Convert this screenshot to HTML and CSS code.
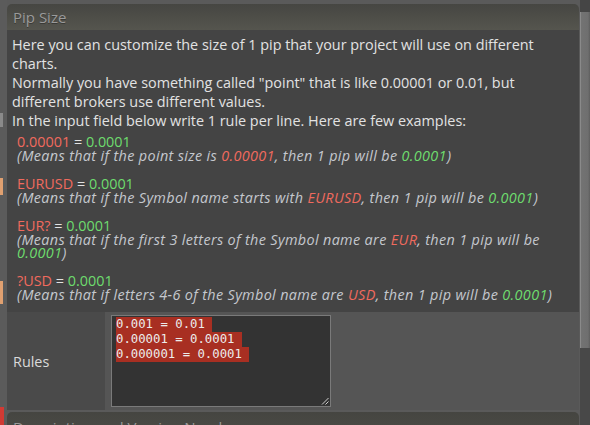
FILE: index.html
```html
<!DOCTYPE html>
<html>
<head>
<meta charset="utf-8">
<link rel="stylesheet" href="styles.css">
</head>
<body>
<div class="strip">
  <div class="mark mark-a"></div>
  <div class="mark mark-b"></div>
  <div class="mark mark-c"></div>
  <div class="mark mark-d"></div>
</div>
<div class="main">
  <section class="panel">
    <div class="panel-head">Pip Size</div>
    <div class="panel-body">
      <p class="intro">Here you can customize the size of 1 pip that your project will use on different charts.<br>Normally you have something called "point" that is like 0.00001 or 0.01, but different brokers use different values.<br>In the input field below write 1 rule per line. Here are few examples:</p>
      <div class="examples">
        <div class="ex">
          <div><span class="r">0.00001</span> = <span class="g">0.0001</span></div>
          <div class="it">(Means that if the point size is <span class="r">0.00001</span>, then 1 pip will be <span class="g">0.0001</span>)</div>
        </div>
        <div class="ex">
          <div><span class="r">EURUSD</span> = <span class="g">0.0001</span></div>
          <div class="it">(Means that if the Symbol name starts with <span class="r">EURUSD</span>, then 1 pip will be <span class="g">0.0001</span>)</div>
        </div>
        <div class="ex">
          <div><span class="r">EUR?</span> = <span class="g">0.0001</span></div>
          <div class="it">(Means that if the first 3 letters of the Symbol name are <span class="r">EUR</span>, then 1 pip will be <span class="g">0.0001</span>)</div>
        </div>
        <div class="ex">
          <div><span class="r">?USD</span> = <span class="g">0.0001</span></div>
          <div class="it">(Means that if letters 4-6 of the Symbol name are <span class="r">USD</span>, then 1 pip will be <span class="g">0.0001</span>)</div>
        </div>
      </div>
    </div>
    <div class="field-row">
      <div class="label">Rules</div>
      <div class="field">
        <div class="textarea">
          <div class="line"><span class="sel">0.001 = 0.01 </span></div>
          <div class="line"><span class="sel">0.00001 = 0.0001 </span></div>
          <div class="line"><span class="sel">0.000001 = 0.0001 </span></div>
          <svg class="grip" width="8" height="8" viewBox="0 0 8 8"><path d="M1 7.5L7.5 1M4.5 7.5L7.5 4.5" stroke="#cfcfcf" stroke-width="1" fill="none"/></svg>
        </div>
      </div>
    </div>
  </section>
  <section class="panel next">
    <div class="panel-head">Description and Version Number</div>
  </section>
</div>
<div class="scrollbar">
  <div class="sb-top"></div>
  <div class="sb-thumb"></div>
  <div class="sb-rest"></div>
</div>
</body>
</html>
```
FILE: styles.css
```css
html, body {
  margin: 0;
  padding: 0;
}
body {
  width: 590px;
  height: 425px;
  overflow: hidden;
  background: #5a5a5a;
  display: flex;
  font-family: "Open Sans", "Liberation Sans", sans-serif;
  font-size: 14.4px;
  color: #e2e2e2;
}
.strip {
  width: 7px;
  flex: none;
  display: flex;
  flex-direction: column;
  background: #5b5b5b;
}
.mark { width: 3px; }
.mark-a { margin-top: 113px; height: 14px; background: #8a8a8a; }
.mark-b { margin-top: 51px; height: 18px; background: #e0a070; }
.mark-c { margin-top: 86px; height: 24px; background: #e0a070; }
.mark-d { margin-top: 103px; height: 18px; width: 4px; background: #d23a34; }
.main {
  width: 572px;
  flex: none;
  padding-top: 4px;
  display: flex;
  flex-direction: column;
}
.panel-head {
  height: 26px;
  box-sizing: border-box;
  padding: 3px 0 0 6px;
  border-radius: 5px 5px 0 0;
  background: linear-gradient(#464642, #55554e);
  color: #9a9a9a;
  font-size: 15px;
  line-height: 20px;
  text-shadow: 0 1px 0 #3a3a36;
}
.panel-body {
  background: #444444;
  padding: 5px 5px 10px 5px;
}
.intro {
  margin: 0;
  line-height: 19px;
}
.examples {
  margin: 5px 0 0 5px;
  display: flex;
  flex-direction: column;
  gap: 14px;
  line-height: 13.9px;
}
.it {
  font-style: italic;
  color: #c4c8ce;
  letter-spacing: 0.35px;
}
.r { color: #f06a5e; }
.g { color: #6edc6e; }
.field-row {
  display: flex;
  height: 98px;
}
.label {
  width: 98px;
  box-sizing: border-box;
  padding: 0 0 0 6px;
  background: #4a4a4a;
  display: flex;
  align-items: center;
  color: #dadada;
}
.field {
  flex: 1;
  background: #555555;
  padding: 3px 0 0 6px;
}
.textarea {
  position: relative;
  width: 220px;
  height: 92px;
  box-sizing: border-box;
  border: 1px solid #7a7a7a;
  background: #333333;
  padding: 1px 4px;
  font-family: "DejaVu Sans Mono", monospace;
  font-size: 12.3px;
  color: #ececec;
}
.line {
  height: 15px;
  line-height: 15px;
  white-space: pre;
}
.sel {
  display: inline-block;
  height: 15px;
  background: #a82f22;
}
.grip {
  position: absolute;
  right: 1px;
  bottom: 1px;
}
.next {
  margin-top: 2px;
}
.next .panel-head {
  background: linear-gradient(#454541, #4c4c46);
  padding-top: 5px;
}
.scrollbar {
  margin-left: 1px;
  width: 10px;
  flex: none;
  display: flex;
  flex-direction: column;
}
.sb-top {
  height: 12px;
  background: #454545;
}
.sb-thumb {
  height: 336px;
  background: linear-gradient(90deg, #8a8a8a 0, #8a8a8a 1px, #737373 1px, #6f6f6f 8px, #5e5e5e 10px);
}
.sb-rest {
  flex: 1;
  background: #484848;
}
```
